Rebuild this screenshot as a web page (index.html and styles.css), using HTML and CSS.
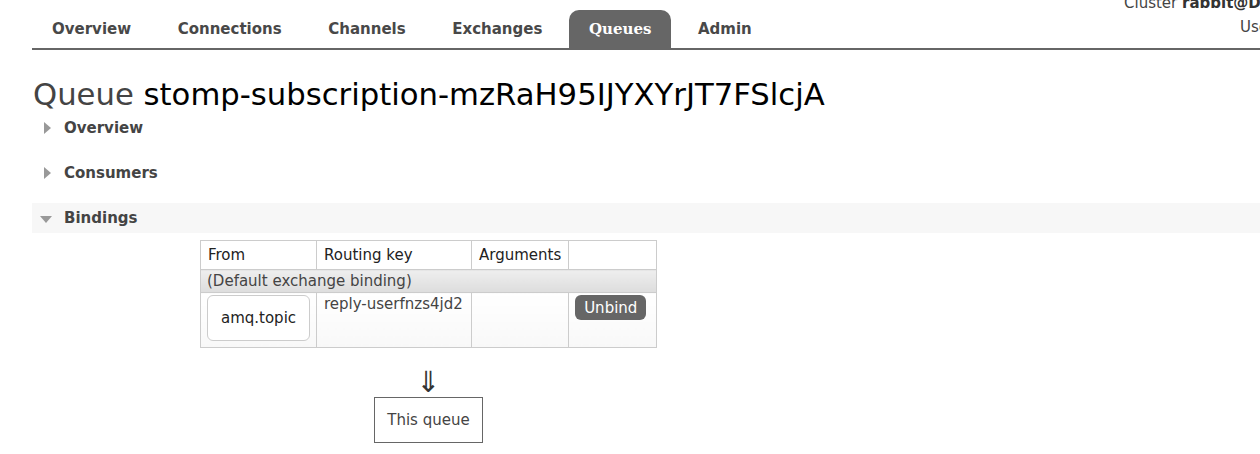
FILE: index.html
```html
<!DOCTYPE html>
<html>
<head>
<meta charset="utf-8">
<link rel="stylesheet" href="styles.css">
</head>
<body>
<div class="header">
  <ul class="menu">
    <li><a>Overview</a></li>
    <li><a>Connections</a></li>
    <li><a>Channels</a></li>
    <li><a>Exchanges</a></li>
    <li class="selected"><a>Queues</a></li>
    <li><a>Admin</a></li>
  </ul>
  <div class="info">
    <div class="info-line cluster">Cluster <b>rabbit@DESKTOP</b></div>
    <div class="info-line user">User guest</div>
  </div>
</div>
<div class="main">
  <h1><span class="label">Queue</span> stomp-subscription-mzRaH95IJYXYrJT7FSlcjA</h1>
  <div class="section"><span class="tri right"></span><span class="sec-title">Overview</span></div>
  <div class="section"><span class="tri right"></span><span class="sec-title">Consumers</span></div>
  <div class="section open"><span class="tri down"></span><span class="sec-title">Bindings</span></div>
  <div class="bindings">
    <table class="list">
      <thead>
        <tr><th class="c1">From</th><th class="c2">Routing key</th><th class="c3">Arguments</th><th class="c4"></th></tr>
      </thead>
      <tbody>
        <tr class="default"><td colspan="4">(Default exchange binding)</td></tr>
        <tr class="row">
          <td class="from"><span class="exchange">amq.topic</span></td>
          <td>reply-userfnzs4jd2</td>
          <td></td>
          <td><button class="unbind">Unbind</button></td>
        </tr>
      </tbody>
    </table>
    <div class="arrow">&#8659;</div>
    <div class="thisqueue">This queue</div>
  </div>
</div>
</body>
</html>
```

FILE: styles.css
```css
html, body {
  margin: 0;
  padding: 0;
  background: #fff;
  overflow: hidden;
}
body {
  font-family: "DejaVu Sans", Verdana, sans-serif;
  font-size: 15px;
  color: #444;
  width: 1260px;
  height: 454px;
}
.header {
  position: relative;
  height: 48px;
  margin-left: 32px;
  border-bottom: 2px solid #666;
}
.menu {
  list-style: none;
  margin: 0;
  padding: 10px 0 0 0;
  display: flex;
}
.menu li {
  margin-right: 6.6px;
}
.menu li a {
  display: block;
  height: 38px;
  line-height: 39px;
  padding: 0 20px;
  font-weight: bold;
  color: #484848;
  border-radius: 10px 10px 0 0;
}
.menu li.selected a {
  background: #666;
  color: #fff;
  font-family: "DejaVu Serif", serif;
}
.info {
  position: absolute;
  left: 1092px;
  top: -8px;
  white-space: nowrap;
  color: #444;
}
.info-line {
  height: 22px;
  line-height: 22px;
}
.cluster b { color: #333; }
.user {
  padding-left: 116px;
  margin-top: 2px;
}
.main {
  margin-left: 32px;
}
h1 {
  margin: 0;
  padding-top: 26px;
  height: 37px;
  line-height: 37px;
  font-size: 30.7px;
  font-weight: normal;
  color: #000;
  padding-left: 1px;
  white-space: nowrap;
}
h1 .label { color: #444; }
.section {
  display: flex;
  align-items: center;
  height: 30px;
  margin-bottom: 15px;
}
.section.open {
  background: #f7f7f7;
  margin-bottom: 7px;
}
.sec-title {
  font-weight: bold;
  color: #444;
}
.tri {
  display: inline-block;
  width: 0;
  height: 0;
}
.tri.right {
  margin-left: 12px;
  margin-right: 13px;
  border-top: 6px solid transparent;
  border-bottom: 6px solid transparent;
  border-left: 7px solid #999;
}
.tri.down {
  margin-left: 8px;
  margin-right: 12px;
  margin-top: 2px;
  border-left: 6px solid transparent;
  border-right: 6px solid transparent;
  border-top: 7px solid #999;
}
.bindings {
  margin-left: 168px;
  width: 457px;
  display: flex;
  flex-direction: column;
  align-items: center;
}
table.list {
  border-collapse: collapse;
  width: 457px;
  border: 1px solid #ccc;
}
table.list th, table.list td {
  border: 1px solid #ccc;
  padding: 0 7px;
  text-align: left;
  font-weight: normal;
}
table.list th {
  height: 28px;
  color: #222;
}
.c1 { width: 101px; }
.c2 { width: 140px; }
.c3 { width: 81px; }
table.list tr.default td {
  height: 22px;
  background: linear-gradient(#eee, #ddd);
  color: #444;
  padding-left: 6px;
}
table.list tr.row td {
  vertical-align: top;
  padding-top: 2px;
  color: #444;
  background: linear-gradient(#fff, #f8f8f8);
}
table.list tr.row td.from {
  padding: 2px 6px 6px 6px;
}
.exchange {
  display: flex;
  align-items: center;
  justify-content: center;
  width: 101px;
  height: 44px;
  border: 1px solid #ccc;
  border-radius: 6px;
  background: #fff;
  color: #222;
}
.unbind {
  display: block;
  font-family: "DejaVu Sans", Verdana, sans-serif;
  font-size: 15px;
  background: #666;
  color: #fff;
  border: none;
  border-radius: 6px;
  height: 25px;
  width: 71px;
  padding: 0;
  margin-left: -1px;
  margin-top: 0;
}
.arrow {
  margin-top: 19px;
  font-size: 29px;
  line-height: 30px;
  height: 30px;
  color: #333;
}
.thisqueue {
  margin-top: 0;
  border: 1px solid #666;
  width: 107px;
  height: 44px;
  line-height: 44px;
  text-align: center;
  color: #444;
}
```
